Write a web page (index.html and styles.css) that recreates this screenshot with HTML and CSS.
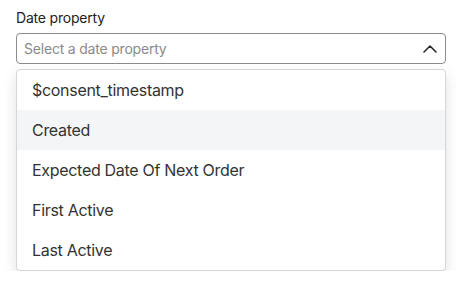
FILE: index.html
```html
<!DOCTYPE html>
<html lang="en">
<head>
  <meta charset="UTF-8" />
  <title>Date property</title>
  <link rel="stylesheet" href="styles.css">
</head>
<body>
  <div class="field">
    <label class="field-label">Date property</label>
    <div class="select">
      <span class="select-placeholder">Select a date property</span>
      <svg class="chevron" width="14" height="8" viewBox="0 0 14 8">
        <path d="M1 7 L7 1 L13 7" fill="none" stroke="#222" stroke-width="1.5" stroke-linecap="round" stroke-linejoin="round"/>
      </svg>
    </div>
    <ul class="menu">
      <li>$consent_timestamp</li>
      <li class="active">Created</li>
      <li>Expected Date Of Next Order</li>
      <li>First Active</li>
      <li>Last Active</li>
    </ul>
  </div>
</body>
</html>
```

FILE: styles.css
```css
body {
  font-family: Inter, "Noto Sans", sans-serif;
  margin: 0;
  background: #fff;
  color: #333;
}
.field {
  padding: 8px 10px 0 16px;
}
.field-label {
  display: block;
  font-size: 14px;
  line-height: 20px;
  letter-spacing: -0.2px;
  color: #222;
  margin-bottom: 5px;
}
.select {
  height: 29px;
  border: 1px solid #8c8c8c;
  border-radius: 4px;
  display: flex;
  align-items: center;
  justify-content: space-between;
  padding: 0 8px 0 7px;
}
.select-placeholder {
  font-size: 14px;
  letter-spacing: -0.2px;
  color: #8a8a8a;
}
.menu {
  list-style: none;
  margin: 5px 0 0;
  padding: 0;
  border: 1px solid #d4d6d9;
  border-radius: 4px;
  background: #fff;
  box-shadow: 0 6px 14px rgba(0,0,0,0.12);
  overflow: hidden;
}
.menu li {
  height: 40px;
  line-height: 40px;
  padding: 0 15px;
  font-size: 16px;
  letter-spacing: -0.3px;
  color: #333;
}
.menu li.active {
  background: #f4f5f6;
}
```
